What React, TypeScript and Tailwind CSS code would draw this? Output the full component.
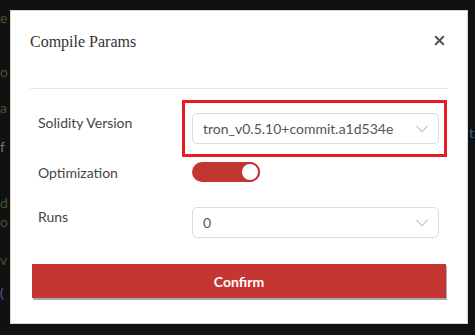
import { X } from "lucide-react";

const codeChars = [
  { ch: "e", top: 8, color: "text-[#3d5a2c]" },
  { ch: "o", top: 62, color: "text-[#3d5a2c]" },
  { ch: "a", top: 98, color: "text-[#3d5a2c]" },
  { ch: "f", top: 137, color: "text-[#6b7585]" },
  { ch: "d", top: 193, color: "text-[#3d5a2c]" },
  { ch: "o", top: 212, color: "text-[#3d5a2c]" },
  { ch: "v", top: 250, color: "text-[#3d5a2c]" },
  { ch: "(", top: 283, color: "text-[#6a4fa0]" },
];

function Chevron() {
  return (
    <svg width="12" height="8" viewBox="0 0 12 8" fill="none" className="shrink-0">
      <path d="M0.5 0.8 L6 6.8 L11.5 0.8" stroke="#bdbdbd" strokeWidth="1.1" />
    </svg>
  );
}

function Select({ value }: { value: string }) {
  return (
    <div className="flex h-[31px] w-[247px] items-center justify-between rounded-[5px] border border-[#dcdcdc] bg-white pl-[10px] pr-[10px]">
      <span className="text-[14px] leading-[20px] text-[#555]">{value}</span>
      <Chevron />
    </div>
  );
}

export default function App() {
  return (
    <div className="relative h-[335px] w-[475px] overflow-hidden bg-[#111111] pl-[10px] pt-[10px] font-['Lato',sans-serif]">
      {codeChars.map((c, i) => (
        <span
          key={i}
          className={`absolute left-0 text-[14px] leading-[20px] ${c.color}`}
          style={{ top: c.top }}
        >
          {c.ch}
        </span>
      ))}
      <span className="absolute left-[469px] top-[123px] text-[14px] leading-[20px] text-[#2f5f8a]">t</span>

      <div className="relative flex h-[314px] w-[458px] flex-col border border-[#d9d5c9] bg-white">
        <div className="mx-[19px] flex h-[78px] items-start justify-between border-b border-[#e6e6e6] pt-[21px]">
          <h2 className="font-['Liberation_Serif',serif] text-[16px] leading-[20px] text-[#333]">Compile Params</h2>
          <X className="mr-[1px] mt-[1px] h-[15px] w-[15px] text-[#555]" strokeWidth={3.2} />
        </div>

        <div className="mt-[11px] grid grid-cols-[144px_1fr] pl-[27px] text-[14px] text-[#444]">
          <div className="pt-[13px] leading-[20px]">Solidity Version</div>
          <div className="h-[57px] w-[265px] border-[3px] border-[#e81c24] pl-[7px] pt-[10px]">
            <Select value="tron_v0.5.10+commit.a1d534e" />
          </div>

          <div className="flex h-[30px] items-center pt-[1px] leading-[20px]">Optimization</div>
          <div className="flex h-[30px] items-center pl-[10px]">
            <div className="flex h-[20px] w-[68px] items-center justify-end rounded-full bg-[#c23631]">
              <div className="h-[20px] w-[20px] rounded-full border-2 border-[#c23631] bg-white" />
            </div>
          </div>

          <div className="pt-[20px] leading-[20px]">Runs</div>
          <div className="pl-[10px] pt-[20px]">
            <Select value="0" />
          </div>
        </div>

        <button className="ml-[21px] mt-[26px] flex h-[34px] w-[414px] items-center justify-center bg-[#c33631] text-[14px] font-bold text-white shadow-[1px_2px_0_#a9a9a9]">
          Confirm
        </button>
      </div>
    </div>
  );
}
